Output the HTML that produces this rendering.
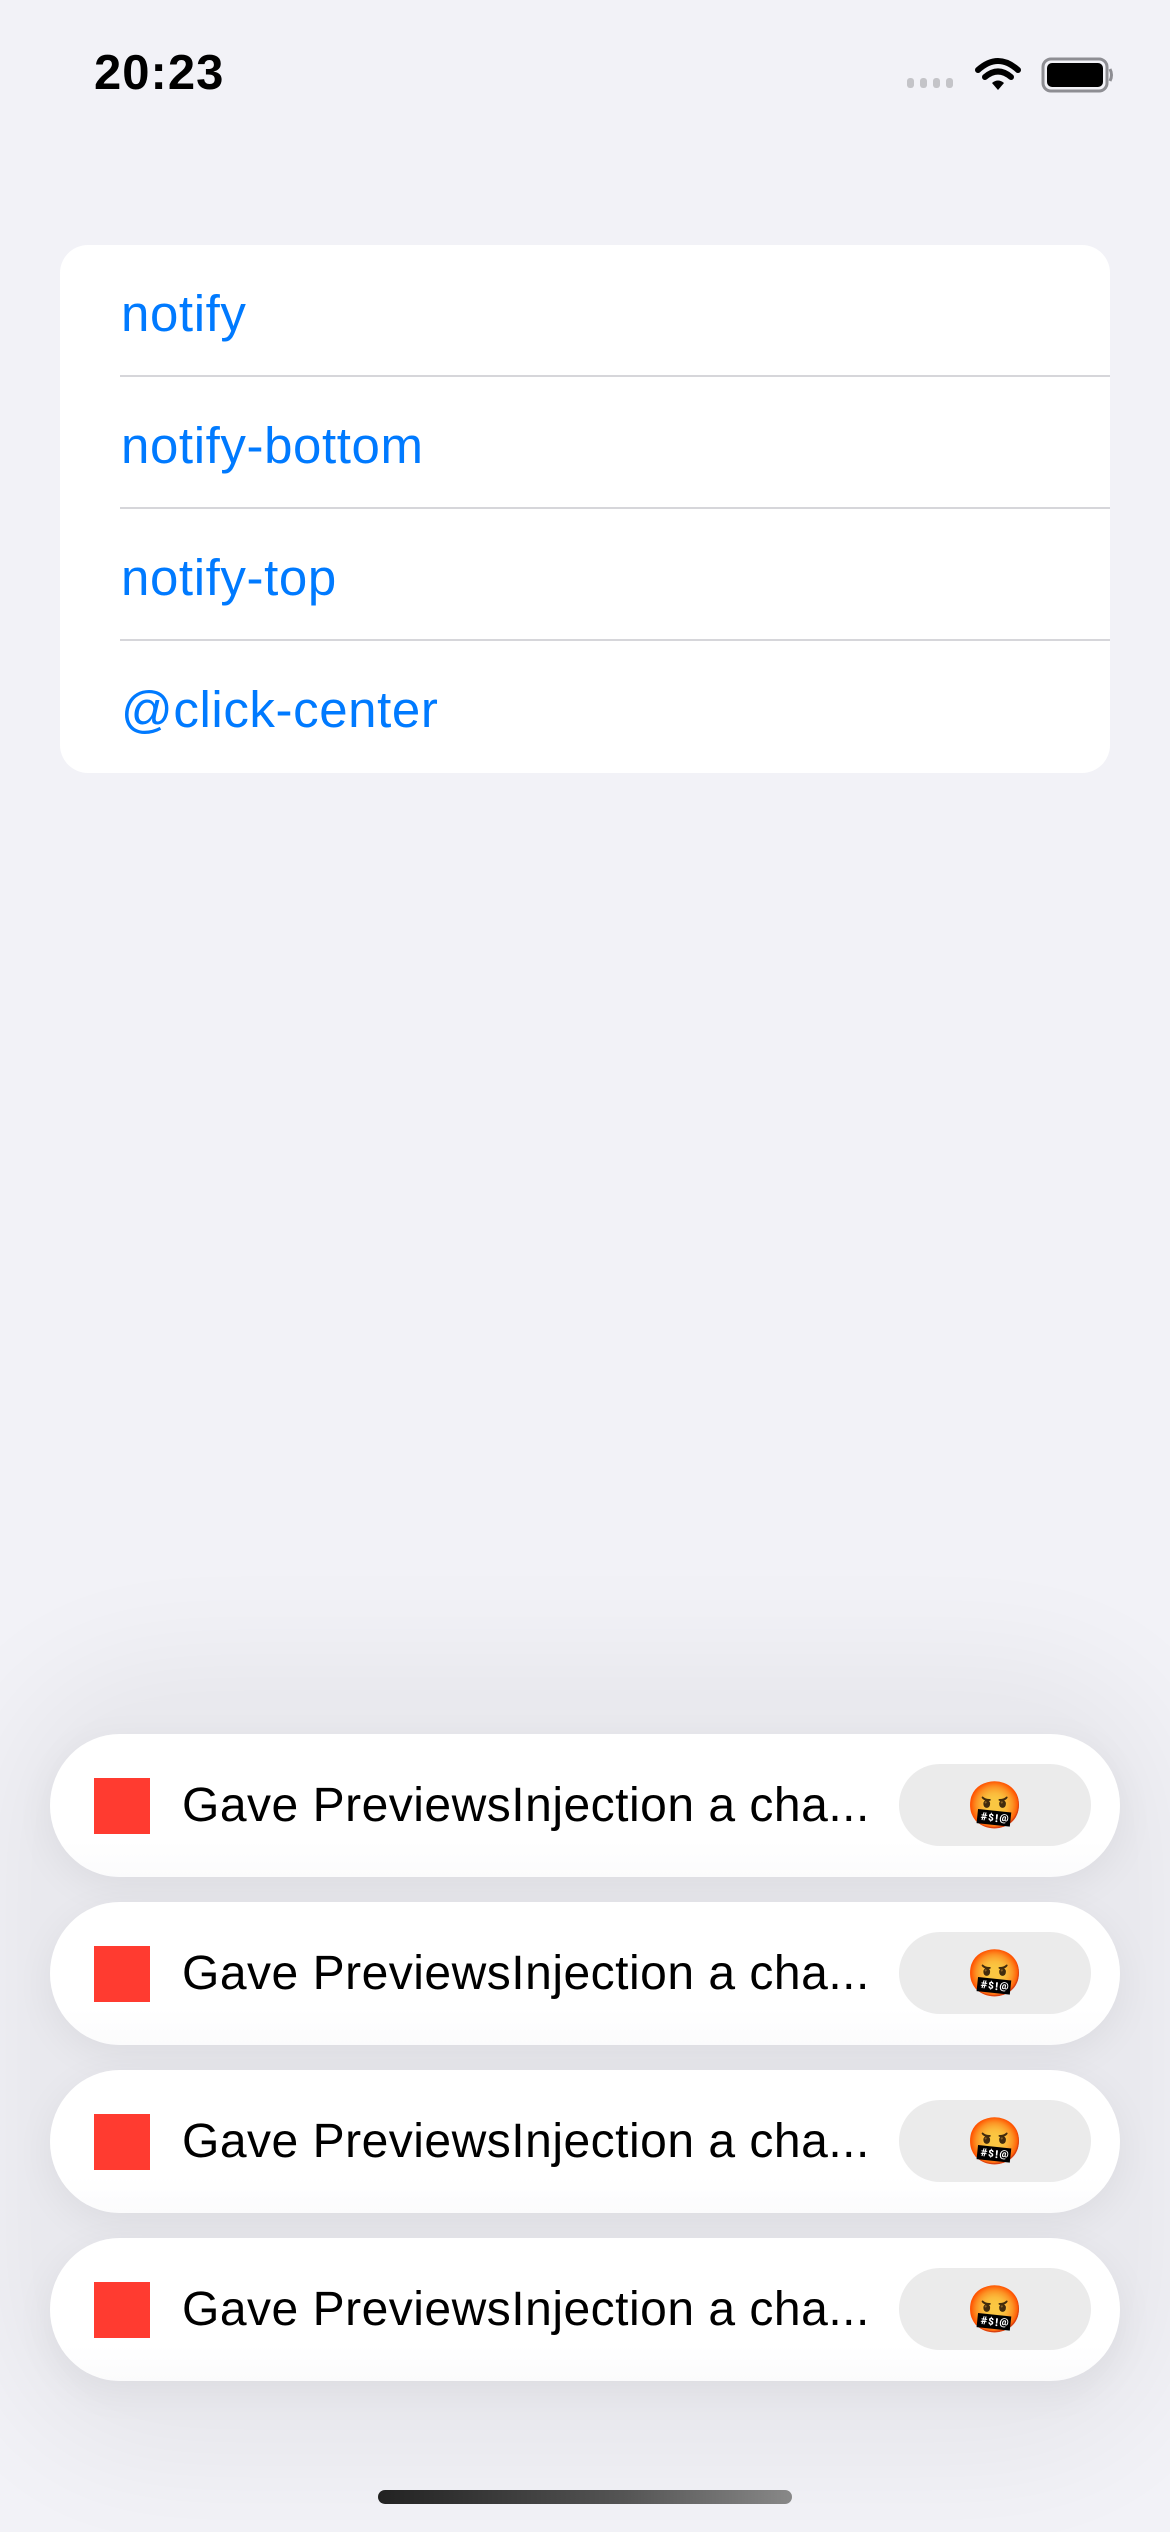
<!DOCTYPE html>
<html><head><meta charset="utf-8"><style>
html,body{margin:0;padding:0}
body{width:1170px;height:2532px;background:#f2f2f7;position:relative;overflow:hidden;font-family:"Liberation Sans",sans-serif}
.time{position:absolute;left:94px;top:45px;font-size:49px;font-weight:bold;color:#000;letter-spacing:1px}
.card{position:absolute;left:60px;top:245px;width:1050px;height:528px;background:#fff;border-radius:28px;overflow:hidden}
.row{position:absolute;left:61px;right:0;height:132px;color:#007aff;font-size:51px;line-height:138px;letter-spacing:0.6px}
.sep{position:absolute;left:60px;right:0;height:2px;background:#d6d6da}
.glow{position:absolute;left:40px;top:1700px;width:1090px;height:720px;border-radius:120px;box-shadow:0 0 120px 40px rgba(0,0,0,0.05);background:rgba(0,0,0,0.035)}
.toast{position:absolute;left:50px;width:1070px;height:143px;background:linear-gradient(#fff 75%,#fbfbfc);border-radius:70px/72px;box-shadow:0 10px 40px rgba(0,0,0,0.06)}
.sq{position:absolute;left:44px;top:44px;width:56px;height:56px;background:#ff3b30}
.txt{position:absolute;left:132px;top:0;line-height:143px;font-size:48px;color:#000;white-space:nowrap;letter-spacing:0.5px}
.btn{position:absolute;left:849px;top:30px;width:192px;height:82px;border-radius:41px;background:#ebebeb;text-align:center;line-height:82px;font-size:46px}
.home{position:absolute;left:378px;top:2490px;width:414px;height:14px;border-radius:7px;background:linear-gradient(90deg,#222,#555 60%,#888)}
</style></head><body>
<div class="time">20:23</div>
<svg style="position:absolute;left:905px;top:56px" width="210" height="40" viewBox="0 0 210 40">
<g fill="#c4c4c8"><rect x="2" y="22" width="7" height="10" rx="3"/><rect x="15" y="22" width="7" height="10" rx="3"/><rect x="28" y="22" width="7" height="10" rx="3"/><rect x="41" y="22" width="7" height="10" rx="3"/></g>
<g fill="none" stroke="#000" stroke-width="6" stroke-linecap="round"><path d="M73 14 Q93 -4 113 14"/><path d="M80 21 Q93 10 106 21"/></g>
<path d="M87 27 Q93 22 99 27 L93 34 Z" fill="#000"/>
<rect x="138" y="3" width="64" height="32" rx="8" fill="none" stroke="#8e8e93" stroke-width="3"/>
<rect x="142" y="7" width="56" height="24" rx="5" fill="#000"/>
<path d="M205 13 Q208 19 205 25" stroke="#8e8e93" stroke-width="3" fill="none"/>
</svg>
<div class="card">
<div class="row" style="top:0">notify</div>
<div class="sep" style="top:130px"></div>
<div class="row" style="top:132px">notify-bottom</div>
<div class="sep" style="top:262px"></div>
<div class="row" style="top:264px">notify-top</div>
<div class="sep" style="top:394px"></div>
<div class="row" style="top:396px">@click-center</div>
</div>
<div class="glow"></div>
<div class="toast" style="top:1734px"><div class="sq"></div><div class="txt">Gave PreviewsInjection a cha...</div><div class="btn">🤬</div></div>
<div class="toast" style="top:1902px"><div class="sq"></div><div class="txt">Gave PreviewsInjection a cha...</div><div class="btn">🤬</div></div>
<div class="toast" style="top:2070px"><div class="sq"></div><div class="txt">Gave PreviewsInjection a cha...</div><div class="btn">🤬</div></div>
<div class="toast" style="top:2238px"><div class="sq"></div><div class="txt">Gave PreviewsInjection a cha...</div><div class="btn">🤬</div></div>
<div class="home"></div>
</body></html>
